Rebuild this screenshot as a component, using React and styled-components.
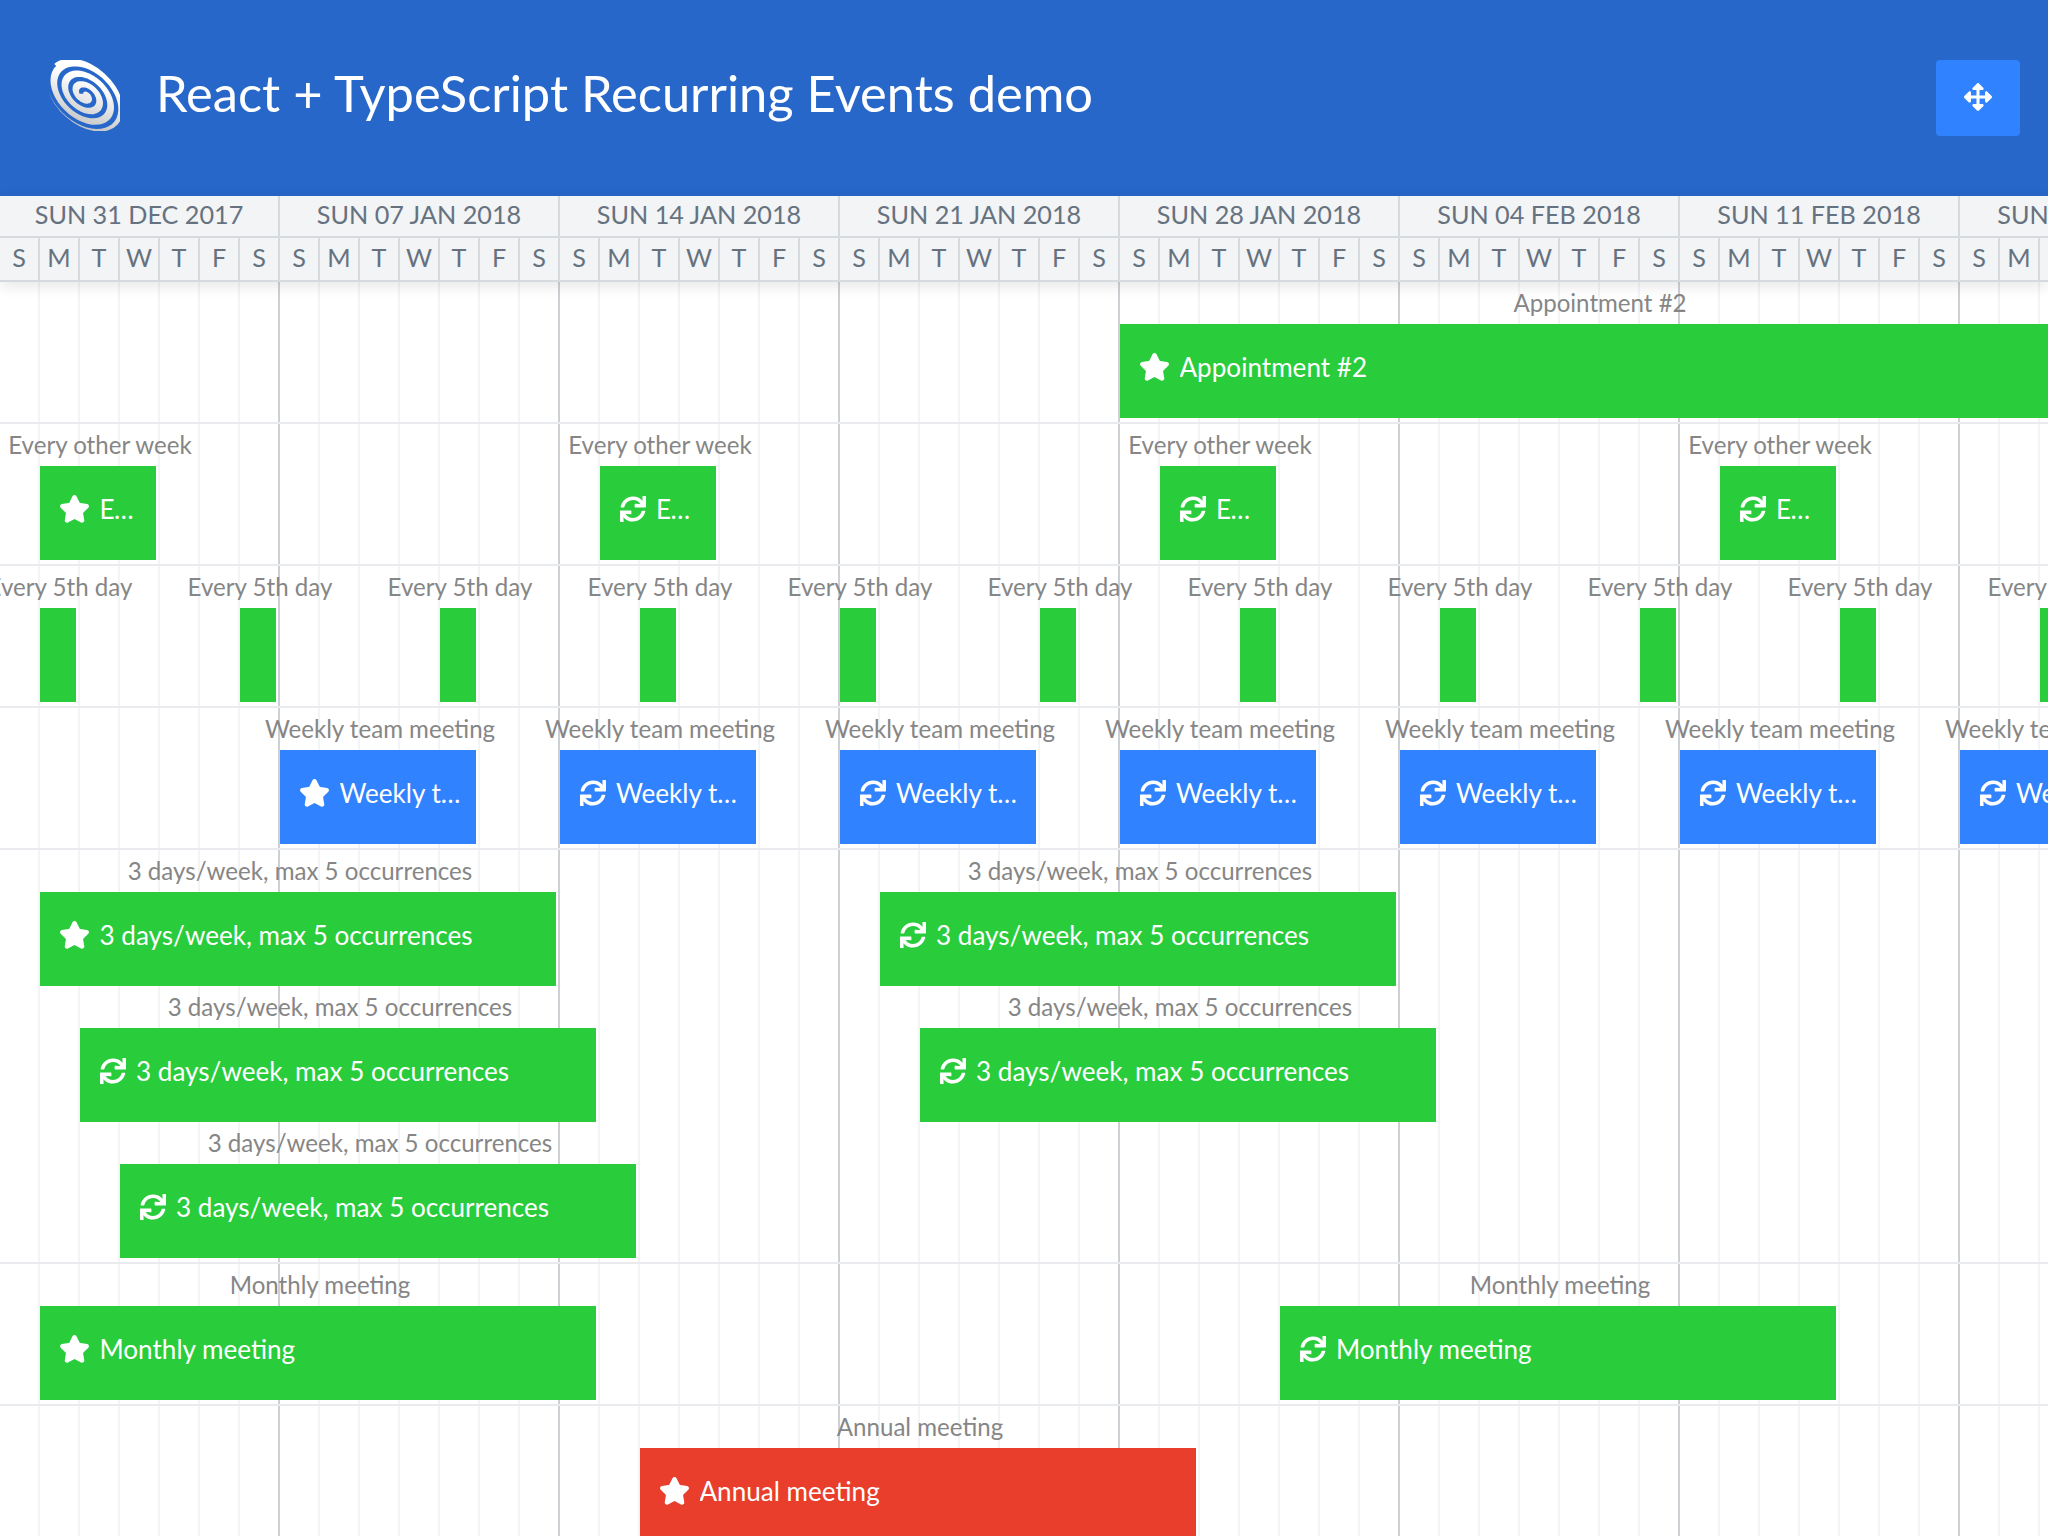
import React from "react";
import styled, { createGlobalStyle } from "styled-components";
import { FaArrowsAlt, FaSync } from "react-icons/fa";
import { Star } from "lucide-react";

const GREEN = "#29cc3b";
const BLUE = "#3182fe";
const RED = "#e83e2b";

const weeks = [
  "SUN 31 DEC 2017",
  "SUN 07 JAN 2018",
  "SUN 14 JAN 2018",
  "SUN 21 JAN 2018",
  "SUN 28 JAN 2018",
  "SUN 04 FEB 2018",
  "SUN 11 FEB 2018",
  "SUN 18 FEB 2018",
];
const days = ["S", "M", "T", "W", "T", "F", "S"];

const every = (name, first, step, count, span, color = GREEN) =>
  Array.from({ length: count }, (_, i) => ({
    name,
    start: first + i * step,
    span,
    color,
    master: i === 0,
  }));

const threeDays = "3 days/week, max 5 occurrences";

const rows = [
  [{ name: "Appointment #2", start: 28, span: 24, color: GREEN, master: true }],
  every("Every other week", 1, 14, 4, 3),
  every("Every 5th day", 1, 5, 11, 1),
  every("Weekly team meeting", 7, 7, 7, 5, BLUE),
  [
    { name: threeDays, start: 1, span: 13, color: GREEN, master: true },
    { name: threeDays, start: 22, span: 13, color: GREEN },
    { name: threeDays, start: 2, span: 13, color: GREEN, slot: 2 },
    { name: threeDays, start: 23, span: 13, color: GREEN, slot: 2 },
    { name: threeDays, start: 3, span: 13, color: GREEN, slot: 3 },
  ],
  [
    { name: "Monthly meeting", start: 1, span: 14, color: GREEN, master: true },
    { name: "Monthly meeting", start: 32, span: 14, color: GREEN },
  ],
  [{ name: "Annual meeting", start: 16, span: 14, color: RED, master: true }],
];

// spiral band cut out of the logo ellipse
const spiral = Array.from({ length: 140 }, (_, i) => {
  const t = (i / 139) * Math.PI * 2 * 3.1;
  const r = 4 + (t / (Math.PI * 2)) * 12.8;
  return `${i ? "L" : "M"}${(r * Math.cos(t + 2.6)).toFixed(2)} ${(r * Math.sin(t + 2.6)).toFixed(2)}`;
}).join(" ");

function Logo() {
  return (
    <LogoBox viewBox="0 0 71 71">
      <defs>
        <linearGradient id="logoFill" x1="0.2" y1="0" x2="0.8" y2="1">
          <stop offset="0.3" stopColor="#ffffff" />
          <stop offset="1" stopColor="#bdbdbd" />
        </linearGradient>
      </defs>
      <g transform="translate(36 35) rotate(42) scale(1 0.66)">
        <circle r="44" fill="url(#logoFill)" />
        <path d={spiral} fill="none" stroke="#2767c9" strokeWidth="5" />
      </g>
    </LogoBox>
  );
}

function EventItem({ name, start, span, color, master, slot = 1 }) {
  const wide = span > 1;
  return (
    <EventBox $start={start} $span={span} $slot={slot}>
      <EventLabel>{name}</EventLabel>
      <Bar $color={color} $wide={wide}>
        {wide && (master ? <StarIcon fill="#fff" strokeWidth={2.4} /> : <SyncIcon />)}
        {wide && <BarText>{name}</BarText>}
      </Bar>
    </EventBox>
  );
}

export default function App() {
  return (
    <Page>
      <GlobalStyle />
      <TopBar>
        <Logo />
        <Title>React + TypeScript Recurring Events demo</Title>
        <MoveButton>
          <FaArrowsAlt size={28} />
        </MoveButton>
      </TopBar>
      <TimeHeader>
        <WeekRow>
          {weeks.map((w) => (
            <WeekCell key={w}>{w}</WeekCell>
          ))}
        </WeekRow>
        <DayRow>
          {weeks.map((w) =>
            days.map((d, i) => <DayCell key={w + i}>{d}</DayCell>)
          )}
        </DayRow>
      </TimeHeader>
      <Board>
        {rows.map((events, i) => (
          <Row key={i}>
            {events.map((e) => (
              <EventItem key={`${e.start}-${e.name}`} {...e} />
            ))}
          </Row>
        ))}
      </Board>
    </Page>
  );
}

const GlobalStyle = createGlobalStyle`
  html, body {
    margin: 0;
    padding: 0;
    background: #fff;
    font-family: Lato, "Open Sans", sans-serif;
  }
`;

const Page = styled.div`
  width: 2048px;
  height: 1536px;
  overflow: hidden;
  display: flex;
  flex-direction: column;
`;

const TopBar = styled.header`
  height: 196px;
  flex: none;
  display: flex;
  align-items: flex-start;
  background: #2767c9;
  padding: 60px 28px 0 49px;
  box-sizing: border-box;
`;

const LogoBox = styled.svg`
  width: 71px;
  height: 71px;
  flex: none;
`;

const Title = styled.h1`
  margin: 0 0 0 36px;
  flex: 1;
  font-size: 50.6px;
  line-height: 66px;
  font-weight: 400;
  color: #fff;
  white-space: nowrap;
`;

const MoveButton = styled.button`
  width: 84px;
  height: 76px;
  border: 0;
  padding: 0 0 2px;
  border-radius: 4px;
  background: ${BLUE};
  color: #fff;
  display: flex;
  align-items: center;
  justify-content: center;
`;

const TimeHeader = styled.div`
  flex: none;
  position: relative;
  z-index: 2;
  background: #f2f4f6;
  color: #66727f;
  border-bottom: 2px solid #d6d9dd;
  box-shadow: 0 4px 14px rgba(0, 0, 0, 0.1);
`;

const WeekRow = styled.div`
  display: grid;
  grid-template-columns: repeat(8, 280px);
  height: 42px;
  border-bottom: 2px solid #d6d9dd;
  box-sizing: border-box;
`;

const WeekCell = styled.div`
  font-size: 25.2px;
  line-height: 37px;
  text-align: center;
  white-space: nowrap;
  border-right: 2px solid #d6d9dd;
`;

const DayRow = styled.div`
  display: grid;
  grid-template-columns: repeat(56, 40px);
  height: 42px;
`;

const DayCell = styled.div`
  font-size: 25.2px;
  line-height: 39px;
  text-align: center;
  border-right: 2px solid #d6d9dd;
`;

const Board = styled.main`
  flex: 1;
  background-image:
    repeating-linear-gradient(to right, transparent 0 278px, #cdd0d5 278px 280px),
    repeating-linear-gradient(to right, transparent 0 38px, #f3f4f6 38px 40px);
`;

const Row = styled.section`
  display: grid;
  grid-template-columns: repeat(56, 40px);
  grid-auto-rows: 136px;
  padding-bottom: 4px;
  border-bottom: 2px solid #e9ebee;
`;

const EventBox = styled.div`
  grid-column: ${(p) => p.$start + 1} / span ${(p) => p.$span};
  grid-row: ${(p) => p.$slot};
  min-width: 0;
  display: flex;
  flex-direction: column;
`;

const EventLabel = styled.div`
  height: 40px;
  margin-bottom: 2px;
  flex: none;
  display: flex;
  align-items: center;
  justify-content: center;
  font-size: 24.1px;
  color: #868686;
  white-space: nowrap;
`;

const Bar = styled.div`
  height: 94px;
  margin-right: 4px;
  box-sizing: border-box;
  padding: ${(p) => (p.$wide ? "28px 14px 0 20px" : "0")};
  display: flex;
  align-items: flex-start;
  background: ${(p) => p.$color};
  color: #fff;
  overflow: hidden;
`;

const StarIcon = styled(Star)`
  width: 31px;
  height: 31px;
  flex: none;
  margin: 0 10px 0 -1.5px;
`;

const SyncIcon = styled(FaSync)`
  width: 26px;
  height: 26px;
  flex: none;
  margin: 2px 10px 0 0;
`;

const BarText = styled.span`
  min-width: 0;
  font-size: 26.1px;
  line-height: 30px;
  white-space: nowrap;
  overflow: hidden;
  text-overflow: ellipsis;
`;
